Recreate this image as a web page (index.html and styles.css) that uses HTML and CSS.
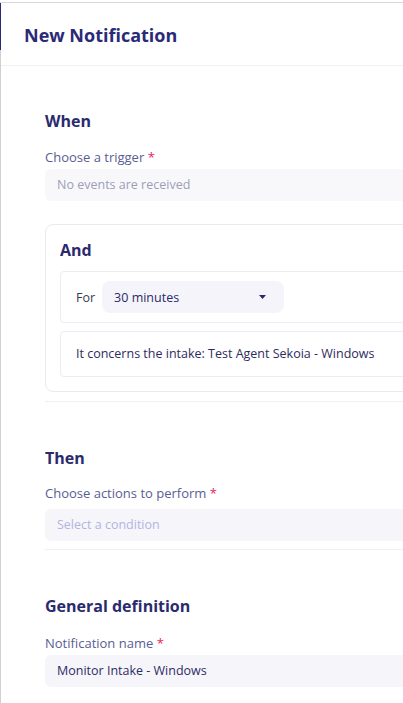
FILE: index.html
```html
<!DOCTYPE html>
<html lang="en">
<head>
<meta charset="utf-8">
<title>New Notification</title>
<link rel="stylesheet" href="styles.css">
</head>
<body>
<div class="page">
  <header class="header">
    <h1 class="title">New Notification</h1>
  </header>
  <main class="form">
    <section class="section section-when">
      <h2 class="heading">When</h2>
      <label class="label">Choose a trigger <span class="req">*</span></label>
      <div class="input input-disabled">No events are received</div>
      <div class="card">
        <h2 class="heading">And</h2>
        <div class="row row-for">
          <span class="for">For</span>
          <div class="select">
            <span>30 minutes</span>
            <svg class="caret" width="7" height="4" viewBox="0 0 7 4"><path d="M0 0h7L3.5 4z" fill="#2b2a66"/></svg>
          </div>
        </div>
        <div class="row row-text">It concerns the intake: Test Agent Sekoia - Windows</div>
      </div>
    </section>
    <section class="section section-then">
      <h2 class="heading">Then</h2>
      <label class="label label-then">Choose actions to perform <span class="req">*</span></label>
      <div class="input input-placeholder">Select a condition</div>
    </section>
    <section class="section section-general">
      <h2 class="heading">General definition</h2>
      <label class="label label-general">Notification name <span class="req">*</span></label>
      <div class="input input-value">Monitor Intake - Windows</div>
    </section>
  </main>
</div>
</body>
</html>
```

FILE: styles.css
```css
* { box-sizing: border-box; }
html, body { margin: 0; padding: 0; background: #fff; overflow: hidden; }
body {
  font-family: "Open Sans", "Noto Sans", sans-serif;
  color: #2d2b5e;
  width: 403px;
  height: 703px;
}
.page {
  margin-top: 2px;
  border-top: 1px solid #d9d9d9;
  border-left: 1px solid #d0d0d0;
  width: 640px;
  height: 701px;
}
.header {
  position: relative;
  height: 63px;
  border-bottom: 1px solid #f0f0f2;
  padding: 19px 0 0 23px;
}
.header::before {
  content: "";
  position: absolute;
  left: -1px;
  top: 0;
  width: 1px;
  height: 47px;
  background: #2b2a78;
}
.title {
  margin: 0;
  font-size: 18px;
  line-height: 26px;
  font-weight: 700;
  color: #2b2a78;
}
.form { padding-left: 44px; }
.section {
  padding-top: 44px;
  border-bottom: 1px solid #f0f0f3;
}
.section-when { padding-bottom: 9px; }
.section-then { padding-top: 45px; padding-bottom: 8px; }
.section-general { padding-top: 45px; border-bottom: none; }
.heading {
  margin: 0;
  font-size: 16px;
  line-height: 22px;
  font-weight: 700;
  color: #2b2a6e;
}
.label {
  display: block;
  margin-top: 16px;
  font-size: 13px;
  line-height: 18px;
  font-weight: 400;
  color: #5a5d94;
}
.label-then { margin-top: 15px; }
.label-general { margin-top: 17px; }
.req { color: #e8245c; }
.input {
  margin-top: 3px;
  height: 32px;
  border-radius: 6px;
  padding-left: 12px;
  font-size: 12.5px;
  line-height: 32px;
  background: #f8f8fb;
}
.label-then + .input { margin-top: 7px; }
.label-general + .input { margin-top: 3px; }
.input-disabled { color: #9d9db8; }
.input-placeholder { color: #b3b3e2; background: #f6f6fa; }
.input-value { color: #2d2b66; background: #f6f6fa; }
.card {
  margin-top: 23px;
  border: 1px solid #e9e9f2;
  border-radius: 8px;
  padding: 14px 14px 14px 14px;
}
.card .heading { margin-bottom: 10px; }
.row {
  border: 1px solid #ececf3;
  border-radius: 4px;
  padding-left: 15px;
  font-size: 12.5px;
  color: #2d2b5e;
}
.row-for {
  display: flex;
  align-items: center;
  gap: 7px;
  padding-top: 9px;
  padding-bottom: 9px;
}
.for { color: #3a3a55; }
.select {
  width: 182px;
  height: 32px;
  border-radius: 8px;
  background: #f4f4fa;
  display: flex;
  align-items: center;
  justify-content: space-between;
  padding: 0 18px 0 12px;
  color: #2b2a66;
}
.row-text {
  margin-top: 8px;
  height: 46px;
  line-height: 44px;
}
```
